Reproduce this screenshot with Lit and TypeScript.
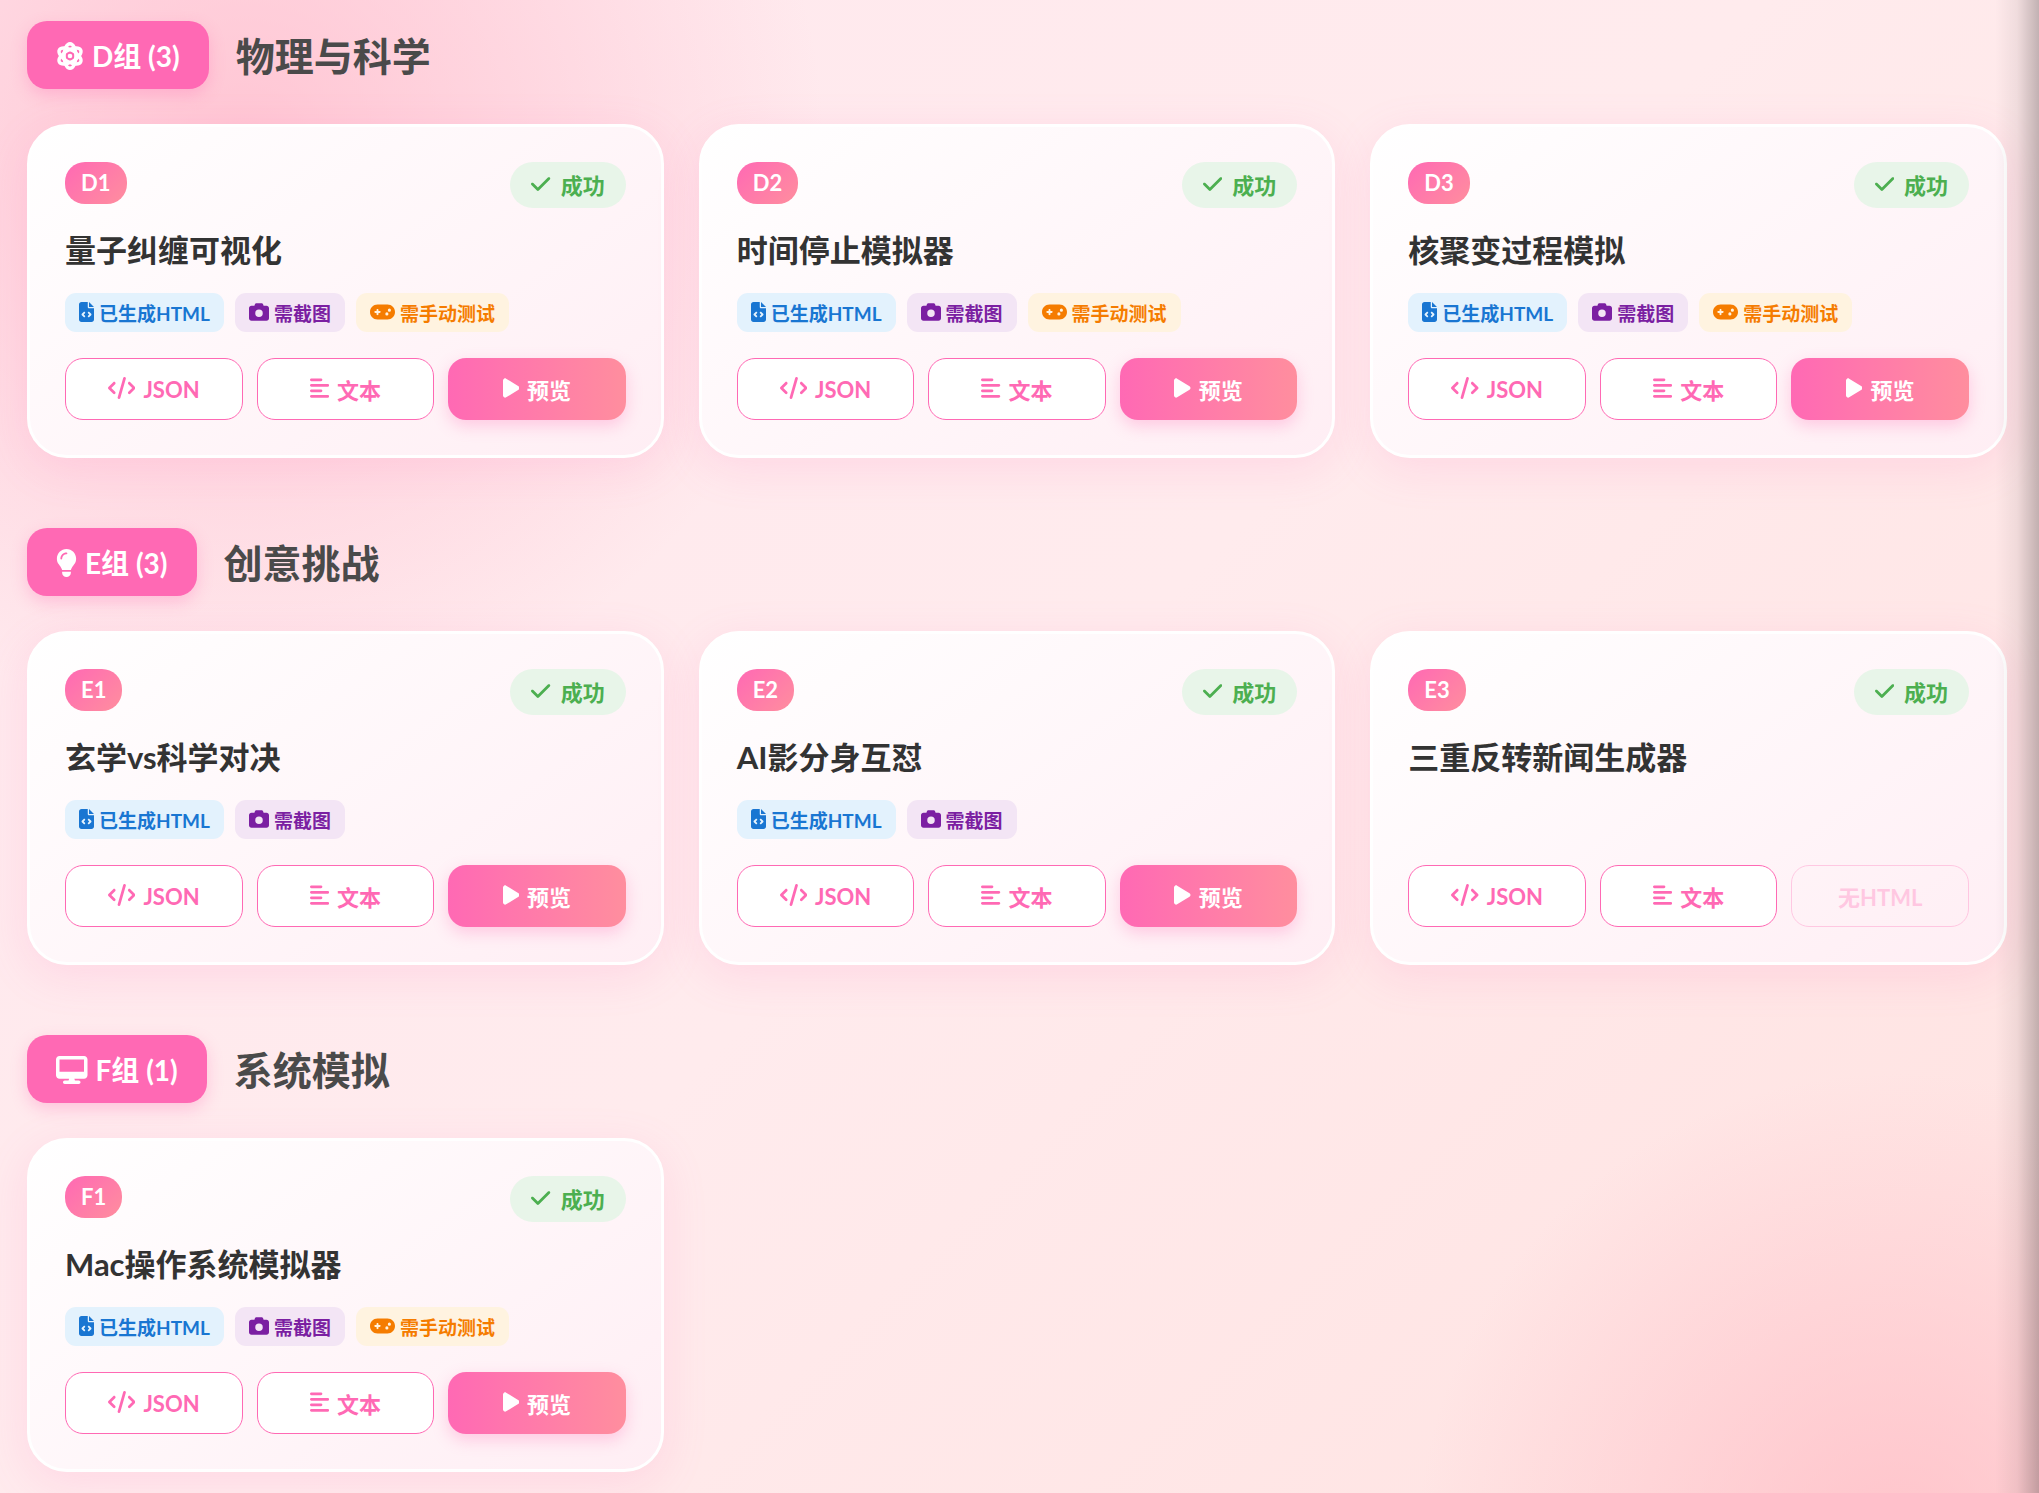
import { LitElement, html, css, svg } from "lit";
import { customElement, property } from "lit/decorators.js";

type Tag = "html" | "shot" | "manual";
interface Demo { id: string; title: string; tags: Tag[]; }
interface Group { name: string; icon: string; title: string; demos: Demo[]; }

const GROUPS: Group[] = [
  {
    name: "D组", icon: "atom", title: "物理与科学",
    demos: [
      { id: "D1", title: "量子纠缠可视化", tags: ["html", "shot", "manual"] },
      { id: "D2", title: "时间停止模拟器", tags: ["html", "shot", "manual"] },
      { id: "D3", title: "核聚变过程模拟", tags: ["html", "shot", "manual"] },
    ],
  },
  {
    name: "E组", icon: "bulb", title: "创意挑战",
    demos: [
      { id: "E1", title: "玄学vs科学对决", tags: ["html", "shot"] },
      { id: "E2", title: "AI影分身互怼", tags: ["html", "shot"] },
      { id: "E3", title: "三重反转新闻生成器", tags: [] },
    ],
  },
  {
    name: "F组", icon: "desktop", title: "系统模拟",
    demos: [{ id: "F1", title: "Mac操作系统模拟器", tags: ["html", "shot", "manual"] }],
  },
];

const TAGS: Record<Tag, { icon: string; label: string }> = {
  html: { icon: "fileCode", label: "已生成HTML" },
  shot: { icon: "camera", label: "需截图" },
  manual: { icon: "gamepad", label: "需手动测试" },
};

/* Each icon: width of its 512-high view box and its shapes. */
const ICONS: Record<string, { w: number; shape: unknown }> = {
  atom: {
    w: 512,
    shape: svg`<g fill="none" stroke="currentColor" stroke-width="62">
      <ellipse cx="256" cy="256" rx="108" ry="224"/>
      <ellipse cx="256" cy="256" rx="108" ry="224" transform="rotate(60 256 256)"/>
      <ellipse cx="256" cy="256" rx="108" ry="224" transform="rotate(120 256 256)"/></g>
      <circle cx="256" cy="256" r="42"/>`,
  },
  bulb: {
    w: 384,
    shape: svg`<path d="M272 384c9.600-31.900 29.500-59.100 49.200-86.200c5.200-7.100 10.400-14.200 15.400-21.400c19.800-28.500 31.400-63 31.400-100.300C368 78.800 289.200 0 192 0S16 78.800 16 176c0 37.300 11.600 71.900 31.400 100.300c5 7.200 10.200 14.300 15.400 21.400c19.800 27.100 39.700 54.400 49.200 86.200H272zM192 512c44.200 0 80-35.800 80-80V416H112v16c0 44.200 35.800 80 80 80zM112 176c0 8.800-7.200 16-16 16s-16-7.200-16-16c0-61.900 50.100-112 112-112c8.800 0 16 7.200 16 16s-7.200 16-16 16c-44.200 0-80 35.800-80 80z"/>`,
  },
  desktop: {
    w: 576,
    shape: svg`<path d="M64 0C28.700 0 0 28.700 0 64V352c0 35.300 28.700 64 64 64H240l-10.700 32H160c-17.700 0-32 14.300-32 32s14.300 32 32 32H416c17.700 0 32-14.300 32-32s-14.300-32-32-32H346.700L336 416H512c35.300 0 64-28.700 64-64V64c0-35.300-28.700-64-64-64H64zM512 64V288H64V64H512z"/>`,
  },
  check: {
    w: 448,
    shape: svg`<path d="M438.600 105.400c12.500 12.500 12.500 32.800 0 45.300l-256 256c-12.500 12.500-32.800 12.500-45.300 0l-128-128c-12.500-12.500-12.500-32.800 0-45.300s32.800-12.500 45.300 0L160 338.700 393.400 105.400c12.500-12.500 32.800-12.500 45.300 0z"/>`,
  },
  fileCode: {
    w: 384,
    shape: svg`<path d="M64 0C28.700 0 0 28.700 0 64V448c0 35.300 28.700 64 64 64H320c35.300 0 64-28.700 64-64V160H256c-17.700 0-32-14.300-32-32V0H64zM256 0V128H384L256 0zM153 289l-31 31 31 31c9.400 9.400 9.400 24.600 0 33.900s-24.600 9.400-33.900 0L71 337c-9.400-9.400-9.400-24.600 0-33.900l48-48c9.400-9.400 24.600-9.400 33.900 0s9.400 24.600 0 33.900zM265 255l48 48c9.400 9.400 9.400 24.600 0 33.900l-48 48c-9.400 9.400-24.600 9.400-33.900 0s-9.400-24.600 0-33.900l31-31-31-31c-9.400-9.400-9.400-24.600 0-33.900s24.600-9.400 33.900 0z"/>`,
  },
  camera: {
    w: 512,
    shape: svg`<path d="M149.100 64.800L138.700 96H64C28.700 96 0 124.700 0 160V416c0 35.300 28.700 64 64 64H448c35.300 0 64-28.700 64-64V160c0-35.300-28.700-64-64-64H373.300L362.900 64.800C356.400 45.200 338.100 32 317.400 32H194.600c-20.700 0-39 13.200-45.500 32.800zM256 192a96 96 0 1 1 0 192 96 96 0 1 1 0-192z"/>`,
  },
  gamepad: {
    w: 640,
    shape: svg`<path d="M192 64C86 64 0 150 0 256S86 448 192 448H448c106 0 192-86 192-192s-86-192-192-192H192zM496 168a40 40 0 1 1 0 80 40 40 0 1 1 0-80zM392 304a40 40 0 1 1 80 0 40 40 0 1 1-80 0zM168 200c0-13.300 10.700-24 24-24s24 10.700 24 24v32h32c13.300 0 24 10.700 24 24s-10.700 24-24 24H216v32c0 13.300-10.700 24-24 24s-24-10.700-24-24V280H136c-13.300 0-24-10.700-24-24s10.700-24 24-24h32V200z"/>`,
  },
  code: {
    w: 640,
    shape: svg`<path d="M392.800 1.200c-17-4.900-34.700 5-39.600 22l-128 448c-4.900 17 5 34.700 22 39.600s34.700-5 39.600-22l128-448c4.900-17-5-34.700-22-39.600zM473.400 121.400c-12.500 12.500-12.500 32.800 0 45.300L562.700 256l-89.400 89.400c-12.500 12.500-12.500 32.800 0 45.300s32.800 12.500 45.300 0l112-112c12.500-12.500 12.500-32.800 0-45.300l-112-112c-12.500-12.500-32.800-12.500-45.300 0zM166.600 121.400c-12.500-12.500-32.800-12.500-45.300 0l-112 112c-12.500 12.500-12.500 32.800 0 45.300l112 112c12.500 12.500 32.800 12.500 45.300 0s12.500-32.800 0-45.300L77.300 256l89.400-89.400c12.500-12.500 12.500-32.800 0-45.300z"/>`,
  },
  lines: {
    w: 448,
    shape: svg`<path d="M288 64c0 17.700-14.300 32-32 32H32C14.300 96 0 81.700 0 64S14.300 32 32 32H256c17.700 0 32 14.300 32 32zm0 256c0 17.700-14.300 32-32 32H32c-17.700 0-32-14.300-32-32s14.300-32 32-32H256c17.700 0 32 14.300 32 32zM0 192c0-17.700 14.300-32 32-32H416c17.700 0 32 14.300 32 32s-14.300 32-32 32H32c-17.700 0-32-14.300-32-32zM448 448c0 17.700-14.300 32-32 32H32c-17.700 0-32-14.300-32-32s14.300-32 32-32H416c17.700 0 32 14.300 32 32z"/>`,
  },
  play: {
    w: 384,
    shape: svg`<path d="M73 39c-14.800-9.100-33.400-9.400-48.500-.9S0 62.600 0 80V432c0 17.400 9.400 33.400 24.500 41.900s33.700 8.100 48.500-.9L361 297c14.300-8.700 23-24.200 23-41s-8.700-32.200-23-41L73 39z"/>`,
  },
};

const icon = (name: string) => {
  const { w, shape } = ICONS[name];
  return html`<svg class="icon" viewBox="0 0 ${w} 512" fill="currentColor" aria-hidden="true">${shape}</svg>`;
};

@customElement("demo-card")
export class DemoCard extends LitElement {
  @property({ attribute: false }) demo!: Demo;

  static styles = css`
    :host { display: block; }
    .card {
      box-sizing: border-box;
      height: 100%;
      padding: 35px;
      border: 3px solid #fff;
      border-radius: 40px;
      background: linear-gradient(145deg, #ffffff, #ffeef4);
      box-shadow: 0 11px 44px rgba(255, 105, 180, 0.15);
    }
    .head { display: flex; justify-content: space-between; align-items: flex-start; margin-bottom: 20px; }
    .id {
      padding: 8px 16px;
      border-radius: 20px;
      background: linear-gradient(135deg, #ff69b4, #ff8e9e);
      color: #fff;
      font-size: 22px;
      line-height: 26px;
      font-weight: 700;
    }
    .status {
      display: flex;
      align-items: center;
      gap: 10px;
      height: 46px;
      padding: 0 21px;
      border-radius: 23px;
      background: #e8f5e9;
      color: #4caf50;
      font-size: 22px;
      line-height: 30px;
      font-weight: 700;
    }
    .title { margin: 0 0 21px; color: #333; font-size: 31px; line-height: 44px; font-weight: 700; }
    .tags { display: flex; gap: 11px; min-height: 39px; margin: 0 0 26px; padding: 0; list-style: none; }
    .tag {
      display: flex;
      align-items: center;
      gap: 5px;
      height: 39px;
      padding: 0 14px;
      border-radius: 11px;
      font-size: 19px;
      line-height: 30px;
      font-weight: 700;
    }
    .tag-html { background: #e3f2fd; color: #1976d2; }
    .tag-shot { background: #f3e5f5; color: #7b1fa2; }
    .tag-manual { background: #fff3e0; color: #f57c00; }
    .label { padding-top: 2px; }
    .actions { display: grid; grid-template-columns: repeat(3, 1fr); gap: 14px; }
    .action {
      display: flex;
      align-items: center;
      justify-content: center;
      gap: 8px;
      height: 62px;
      padding: 0;
      border: 1px solid #ff69b4;
      border-radius: 18px;
      background: #fff;
      color: #ff69b4;
      font: inherit;
      font-size: 22px;
      font-weight: 700;
      cursor: pointer;
    }
    .primary {
      border: 0;
      background: linear-gradient(90deg, #ff69b4, #ff8e9e);
      color: #fff;
      box-shadow: 0 6px 16px rgba(255, 105, 180, 0.3);
    }
    .action:disabled { background: transparent; opacity: 0.3; cursor: default; }
    .icon { display: block; flex: none; height: 22px; width: auto; margin-bottom: 2px; }
    .tag .icon { height: 20px; }
  `;

  render() {
    const { id, title, tags } = this.demo;
    return html`
      <article class="card">
        <div class="head">
          <span class="id">${id}</span>
          <span class="status">${icon("check")}<span class="label">成功</span></span>
        </div>
        <h3 class="title">${title}</h3>
        <ul class="tags">
          ${tags.map((t) => html`<li class="tag tag-${t}">${icon(TAGS[t].icon)}<span class="label">${TAGS[t].label}</span></li>`)}
        </ul>
        <div class="actions">
          <button class="action" type="button">${icon("code")}<span>JSON</span></button>
          <button class="action" type="button">${icon("lines")}<span>文本</span></button>
          ${tags.includes("html")
            ? html`<button class="action primary" type="button">${icon("play")}<span>预览</span></button>`
            : html`<button class="action" type="button" disabled>无HTML</button>`}
        </div>
      </article>
    `;
  }
}

@customElement("app-root")
export class AppRoot extends LitElement {
  static styles = css`
    :host {
      display: block;
      box-sizing: border-box;
      position: relative;
      min-height: 100vh;
      overflow: hidden;
      padding: 21px 32px 16px 27px;
      background:
        radial-gradient(circle at 12% 10%, rgba(255, 182, 200, 0.7), rgba(255, 182, 200, 0) 580px),
        radial-gradient(circle at 93% 104%, rgba(255, 182, 193, 0.7), rgba(255, 182, 193, 0) 480px),
        linear-gradient(135deg, #ffe8ee, #ffebed 50%, #ffe2e0);
      font-family: Lato, "Noto Sans CJK SC", sans-serif;
    }
    .edge {
      position: absolute;
      inset: 0 0 0 auto;
      width: 44px;
      pointer-events: none;
      background: linear-gradient(90deg, rgba(0, 0, 0, 0), rgba(0, 0, 0, 0.06) 50%, rgba(0, 0, 0, 0.24));
    }
    .groups { display: flex; flex-direction: column; gap: 70px; }
    .heading { display: flex; align-items: center; gap: 27px; margin-bottom: 35px; }
    .badge {
      display: flex;
      align-items: center;
      gap: 8px;
      padding: 2px 29px 0;
      border-radius: 20px;
      background: #ff69b4;
      color: #fff;
      font-size: 28px;
      line-height: 66px;
      font-weight: 700;
      box-shadow: 0 6px 16px rgba(255, 105, 180, 0.3);
    }
    .name { margin: 0; padding-top: 2px; color: #4a4a4a; font-size: 39px; line-height: 56px; font-weight: 700; }
    .grid { display: grid; grid-template-columns: repeat(3, 1fr); gap: 35px; }
    .icon { display: block; flex: none; height: 28px; width: auto; }
  `;

  render() {
    return html`
      <main class="groups">
        ${GROUPS.map((g) => html`
          <section>
            <header class="heading">
              <span class="badge">${icon(g.icon)}<span>${g.name} (${g.demos.length})</span></span>
              <h2 class="name">${g.title}</h2>
            </header>
            <div class="grid">${g.demos.map((d) => html`<demo-card .demo=${d}></demo-card>`)}</div>
          </section>`)}
      </main>
      <div class="edge"></div>
    `;
  }
}
